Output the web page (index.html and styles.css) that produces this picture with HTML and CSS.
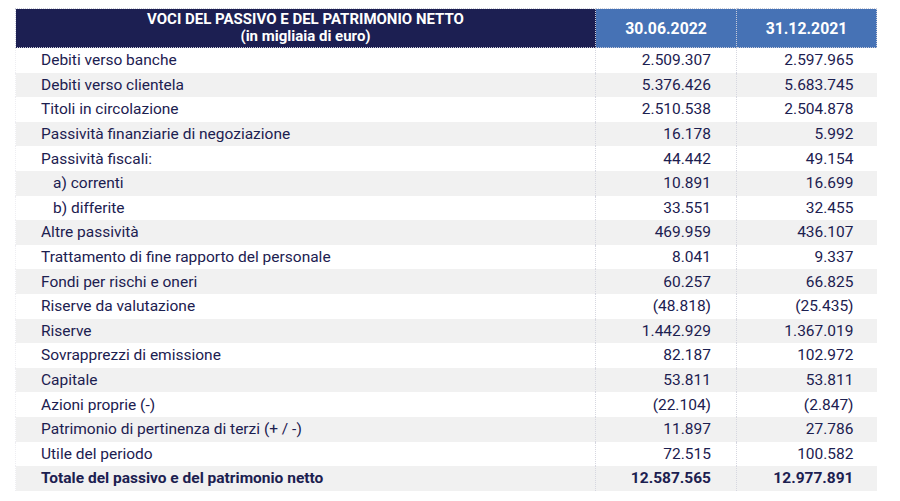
FILE: index.html
```html
<!DOCTYPE html>
<html lang="it">
<head>
<meta charset="utf-8">
<title>Voci del passivo</title>
<link rel="stylesheet" href="styles.css">
</head>
<body>
<table class="bs">
  <colgroup>
    <col class="c-label">
    <col class="c-num">
    <col class="c-num2">
  </colgroup>
  <thead>
    <tr>
      <th class="h-title">VOCI DEL PASSIVO E DEL PATRIMONIO NETTO<br>(in migliaia di euro)</th>
      <th class="h-date">30.06.2022</th>
      <th class="h-date">31.12.2021</th>
    </tr>
  </thead>
  <tbody>
    <tr><td>Debiti verso banche</td><td>2.509.307</td><td>2.597.965</td></tr>
    <tr><td>Debiti verso clientela</td><td>5.376.426</td><td>5.683.745</td></tr>
    <tr><td>Titoli in circolazione</td><td>2.510.538</td><td>2.504.878</td></tr>
    <tr><td>Passività finanziarie di negoziazione</td><td>16.178</td><td>5.992</td></tr>
    <tr><td>Passività fiscali:</td><td>44.442</td><td>49.154</td></tr>
    <tr><td class="sub">a) correnti</td><td>10.891</td><td>16.699</td></tr>
    <tr><td class="sub">b) differite</td><td>33.551</td><td>32.455</td></tr>
    <tr><td>Altre passività</td><td>469.959</td><td>436.107</td></tr>
    <tr><td>Trattamento di fine rapporto del personale</td><td>8.041</td><td>9.337</td></tr>
    <tr><td>Fondi per rischi e oneri</td><td>60.257</td><td>66.825</td></tr>
    <tr><td>Riserve da valutazione</td><td>(48.818)</td><td>(25.435)</td></tr>
    <tr><td>Riserve</td><td>1.442.929</td><td>1.367.019</td></tr>
    <tr><td>Sovrapprezzi di emissione</td><td>82.187</td><td>102.972</td></tr>
    <tr><td>Capitale</td><td>53.811</td><td>53.811</td></tr>
    <tr><td>Azioni proprie (-)</td><td>(22.104)</td><td>(2.847)</td></tr>
    <tr><td>Patrimonio di pertinenza di terzi (+ / -)</td><td>11.897</td><td>27.786</td></tr>
    <tr><td>Utile del periodo</td><td>72.515</td><td>100.582</td></tr>
    <tr class="total"><td>Totale del passivo e del patrimonio netto</td><td>12.587.565</td><td>12.977.891</td></tr>
  </tbody>
</table>
</body>
</html>
```
FILE: styles.css
```css
html, body {
  margin: 0;
  padding: 0;
  background: #ffffff;
}

body {
  padding: 8px 0 0 15px;
  font-family: Roboto, "Liberation Sans", Arial, sans-serif;
  color: #1c2050;
}

.bs {
  border-collapse: collapse;
  table-layout: fixed;
  width: 861px;
}

.c-label { width: 580px; }
.c-num { width: 141px; }
.c-num2 { width: 140px; }

.bs th {
  color: #ffffff;
  font-weight: 700;
  height: 38px;
  padding: 0;
  text-align: center;
  border: 1px dotted #c9cbd8;
}

.h-title {
  background: #1c1f52;
  font-size: 15px;
  line-height: 17px;
}

.h-date {
  background: #4672b5;
  font-size: 15.8px;
}

.bs td {
  height: 24.6px;
  padding: 0;
  font-size: 15.5px;
  line-height: 18px;
  white-space: nowrap;
  border-left: 1px dotted #d6d7e0;
  border-right: 1px dotted #d6d7e0;
}

.bs td:first-child {
  padding-left: 25px;
  border-left-color: #eeeef2;
}

.bs td.sub {
  padding-left: 37px;
}

.bs td:nth-child(2) {
  text-align: right;
  padding-right: 25px;
}

.bs td:nth-child(3) {
  text-align: right;
  padding-right: 23px;
  border-right: none;
}

.bs tbody tr:nth-child(even) td {
  background: #f1f1f1;
}

.bs tr.total td {
  font-weight: 700;
}
```
